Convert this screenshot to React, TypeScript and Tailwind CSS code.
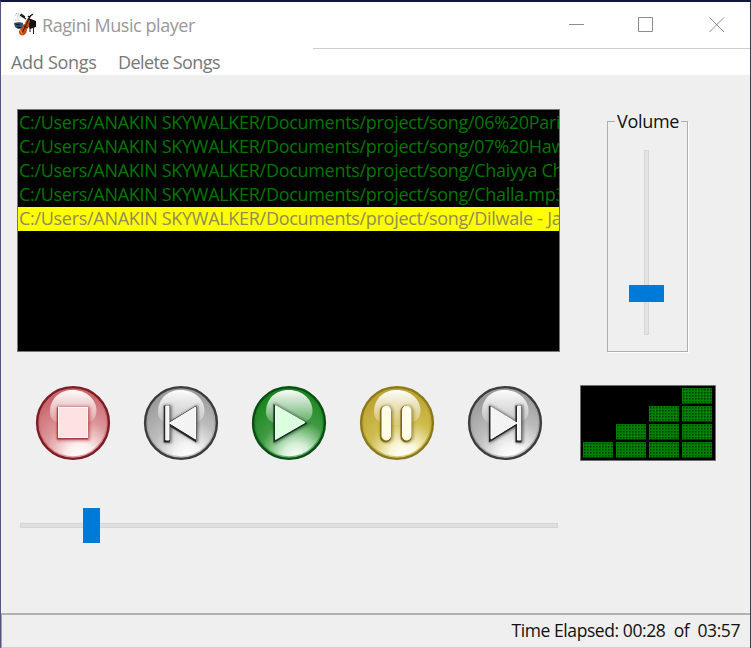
import React from "react";

const songs = [
  "C:/Users/ANAKIN SKYWALKER/Documents/project/song/06%20Pari",
  "C:/Users/ANAKIN SKYWALKER/Documents/project/song/07%20Haw",
  "C:/Users/ANAKIN SKYWALKER/Documents/project/song/Chaiyya Ch",
  "C:/Users/ANAKIN SKYWALKER/Documents/project/song/Challa.mp3",
  "C:/Users/ANAKIN SKYWALKER/Documents/project/song/Dilwale - Ja",
];

function AppIcon() {
  return (
    <svg width="22" height="24" viewBox="0 0 22 24" className="block">
      <path d="M1 3h6M3 5h6M1 8h5M2 1.5h3" stroke="#8a8a8a" strokeWidth="0.7" strokeDasharray="1 0.7" />
      <path d="M6 3l6 4M7 2l4 3" stroke="#111" strokeWidth="1.1" />
      <path d="M15 5l4-3M14 4l2 2" stroke="#111" strokeWidth="1.1" />
      <path d="M12 10l2-4 3 1 5 2v6l-6 2z" fill="#17110f" />
      <path d="M19.500 13v9M16 16v4" stroke="#222" strokeWidth="1" />
      <path d="M0 11l5-1 4 1v5l-5 1-3-2z" fill="#31536b" />
      <path d="M1 12l5 1M3 15l4 1" stroke="#0a1822" strokeWidth="1.2" />
      <path d="M13 8c3-1 4 1 2 4 1 2-1 4-2 5 0 3-1 5-3 6-2 1-5 0-5-3 0-2 1-3 3-4 0-2 1-4 3-4 0-2 1-3 2-4z" fill="#c04c14" />
      <path d="M17 3L8 21M10 14l4 2" stroke="#3a1408" strokeWidth="1" />
      <path d="M6 18c1 1 2 2 2 4" stroke="#f08a3a" strokeWidth="1.2" fill="none" />
    </svg>
  );
}

type Kind = "stop" | "prev" | "play" | "pause" | "next";
const palettes: Record<Kind, { rim: string; edge: string; mid: string; light: string; dark: string; fill: string; inner: string }> = {
  stop: { rim: "#7c1c25", edge: "#c8676d", mid: "#dc9699", light: "#fdeeee", dark: "#a8222b", fill: "#fde2e4", inner: "#fff6f6" },
  prev: { rim: "#3c3c3c", edge: "#9c9c9c", mid: "#bcbcbc", light: "#f3f3f3", dark: "#1c1c1c", fill: "#f3f3f3", inner: "#fff" },
  play: { rim: "#0b4d17", edge: "#1b861f", mid: "#3f9a42", light: "#d5efd5", dark: "#10331a", fill: "#dcffe0", inner: "#f6fff6" },
  pause: { rim: "#8a7a1e", edge: "#bda532", mid: "#cfbd4e", light: "#fbf8dc", dark: "#7a6410", fill: "#fffde6", inner: "#fffff8" },
  next: { rim: "#3c3c3c", edge: "#9c9c9c", mid: "#bcbcbc", light: "#f3f3f3", dark: "#1c1c1c", fill: "#f3f3f3", inner: "#fff" },
};

function Glyph({ kind, fill, stroke, width }: { kind: Kind; fill: string; stroke: string; width: number }) {
  const p = { fill, stroke, strokeWidth: width, strokeLinejoin: "miter" as const };
  if (kind === "stop") return <rect x="23.500" y="22.500" width="29" height="30" {...p} />;
  if (kind === "play") return <path d="M24.500 20.500V54.500L54 37.500z" {...p} />;
  if (kind === "pause")
    return (
      <g {...p}>
        <rect x="23" y="21" width="8.500" height="34" rx="4.200" />
        <rect x="43.500" y="21" width="8.500" height="34" rx="4.200" />
      </g>
    );
  const d = "M22.800 21h3.200v34h-3.200zM26.500 38L52.500 22v32z";
  return <path d={d} transform={kind === "next" ? "translate(76.500 0) scale(-1 1)" : undefined} {...p} />;
}

function RoundButton({ kind }: { kind: Kind }) {
  const c = palettes[kind];
  return (
    <button aria-label={kind} className="block h-[76px] w-[76px]">
      <svg width="76" height="76" viewBox="0 0 76 76" className="block">
        <defs>
          <radialGradient id={`base-${kind}`} cx="0.6" cy="0.98" r="0.9">
            <stop offset="0" stopColor="#fff" />
            <stop offset="0.22" stopColor={c.light} />
            <stop offset="0.58" stopColor={c.mid} />
            <stop offset="1" stopColor={c.edge} />
          </radialGradient>
          <linearGradient id={`gloss-${kind}`} x1="0" y1="0" x2="0" y2="1">
            <stop offset="0" stopColor="#fff" stopOpacity="0.98" />
            <stop offset="0.5" stopColor="#fff" stopOpacity="0.6" />
            <stop offset="1" stopColor="#fff" stopOpacity="0.15" />
          </linearGradient>
          <filter id={`shadow-${kind}`} x="-30%" y="-30%" width="160%" height="160%">
            <feGaussianBlur stdDeviation="1.5" />
          </filter>
          <filter id={`edge-${kind}`} x="-30%" y="-30%" width="160%" height="160%">
            <feGaussianBlur stdDeviation="0.6" />
          </filter>
        </defs>
        <circle cx="38" cy="38" r="35.800" fill={`url(#base-${kind})`} />
        <circle cx="38" cy="38" r="34.400" fill="none" stroke={c.edge} strokeOpacity="0.6" strokeWidth="2.400" />
        <circle cx="38" cy="38" r="35.900" fill="none" stroke={c.rim} strokeWidth="2.400" />
        <path d="M15 27C15 13 25 5 38 5s23.500 9 23.500 21c0 9-8 14-23.500 14S15 36 15 27z" fill={`url(#gloss-${kind})`} />
        <g filter={`url(#shadow-${kind})`} opacity="0.6" transform="translate(0.500 1)">
          <Glyph kind={kind} fill={c.dark} stroke={c.dark} width={4} />
        </g>
        <g filter={`url(#edge-${kind})`} transform="translate(-0.700 1)" opacity={kind === "stop" ? 0.7 : 0.9}>
          <Glyph kind={kind} fill={c.dark} stroke={c.dark} width={kind === "stop" ? 2 : 2.8} />
        </g>
        <Glyph kind={kind} fill={c.fill} stroke={c.inner} width={1} />
      </svg>
    </button>
  );
}

function Equalizer() {
  return (
    <svg width="136" height="76" viewBox="0 0 136 76" className="block">
      <defs>
        <pattern id="dots" width="3" height="3" patternUnits="userSpaceOnUse">
          <rect width="3" height="3" fill="#008400" />
          <rect x="1" y="1" width="1.500" height="1.500" fill="#003a00" />
        </pattern>
      </defs>
      <rect width="136" height="76" fill="#8b8b8b" />
      <rect x="0.800" y="0.800" width="134.400" height="74.400" />
      {[1, 2, 3, 4].flatMap((n, col) =>
        Array.from({ length: n }, (_, row) => (
          <g key={`${col}-${row}`} transform={`translate(${3 + col * 33} ${57 - row * 18})`}>
            <rect width="30" height="15.500" fill="url(#dots)" />
            <path d="M0 .5H30" stroke="#007500" />
          </g>
        )),
      )}
    </svg>
  );
}

export default function App() {
  return (
    <div className="flex h-[648px] w-[751px] flex-col overflow-hidden border-t-2 border-r border-l border-t-[#14173f] border-r-[#403b48] border-l-[#515684] bg-[#efefef] font-['Open_Sans','Noto_Sans',sans-serif]">
      <header className="flex h-[46px] shrink-0 items-start bg-white">
        <div className="mt-[10px] ml-[13px]"><AppIcon /></div>
        <h1 className="mt-[10px] ml-[6px] whitespace-nowrap text-[18px] leading-[27px] tracking-[-0.45px] text-[#999]">Ragini Music player</h1>
        <div className="mt-[14px] mr-[25px] ml-auto flex text-[#8c8c8c]">
          <svg width="156" height="17" viewBox="0 0 156 17" fill="none" stroke="currentColor">
            <path d="M0 8.500h15M69.500 1.500h14v14h-14zM140.500 1.500l14.500 14.500M155 1.500L140.500 16" />
          </svg>
        </div>
      </header>
      <nav className="flex h-[27px] shrink-0 bg-white text-[18px] leading-[28px] text-[#777]">
        <div className="flex w-[312px] whitespace-nowrap">
          <span className="ml-[10px] w-[107px] tracking-[-0.3px]">Add Songs</span>
          <span className="tracking-[-0.6px]">Delete Songs</span>
        </div>
        <div className="grow border-t border-[#ccc]" />
      </nav>
      <main className="flex h-[538px] shrink-0 flex-col pt-[34px]">
        <section className="flex h-[243px]">
          <ul className="ml-4 h-[243px] w-[543px] overflow-hidden border border-[#777] bg-black pt-px text-[18px] leading-[23px] tracking-[-0.3px] text-[#007800]">
            {songs.map((song, i) => (
              <li key={song} className={`h-6 overflow-hidden pl-px whitespace-nowrap ${i === 4 ? "bg-[#ff0] text-[#918b58]" : ""}`}>
                {song}
              </li>
            ))}
          </ul>
          <fieldset className="mt-px ml-[47px] h-[242px] w-[81px] border border-[#adadad] shadow-[1px_1px_0_#fff]">
            <legend className="ml-[7px] px-[2px] text-[18px] leading-[22px] tracking-[-0.3px] text-[#111]">Volume</legend>
            <div className="ml-[21px] flex h-[185px] w-[35px] flex-col items-center">
              <div className="mt-[18px] h-[135px] w-[5px] shrink-0 border border-b-0 border-[#d5d7d7] bg-[#e2e4e4]" />
              <div className="h-[17px] w-[35px] shrink-0 bg-[#007ad9]" />
              <div className="h-[33px] w-[5px] shrink-0 border border-t-0 border-[#d5d7d7] bg-[#e2e4e4]" />
            </div>
          </fieldset>
        </section>
        <section className="mt-[33px] flex h-[76px] pl-[34px]">
          <div className="flex gap-8">
            <RoundButton kind="stop" />
            <RoundButton kind="prev" />
            <RoundButton kind="play" />
            <RoundButton kind="pause" />
            <RoundButton kind="next" />
          </div>
          <div className="ml-[37px]"><Equalizer /></div>
        </section>
        <div className="mt-[47px] ml-[19px] flex h-[35px] w-[538px] items-center">
          <div className="h-[5px] w-[63px] border border-r-0 border-[#d5d5d5] bg-[#e0e0e0]" />
          <div className="h-[35px] w-[17px] bg-[#007ad9]" />
          <div className="h-[5px] grow border border-l-0 border-[#d5d5d5] bg-[#e0e0e0]" />
        </div>
      </main>
      <footer className="flex grow justify-end border-t-2 border-b border-l border-t-[#b0b2b2] border-b-[#d0d0d0] border-l-[#a0a0a0] pr-[10px] text-[17.5px] leading-[31px] tracking-[-0.42px] whitespace-pre text-[#111]">
        Time Elapsed: 00:28  of  03:57
      </footer>
    </div>
  );
}
